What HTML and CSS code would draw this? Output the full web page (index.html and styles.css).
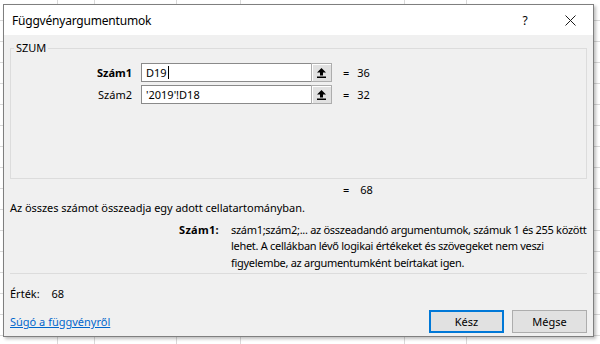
FILE: index.html
```html
<!DOCTYPE html>
<html lang="hu">
<head>
    <meta charset="UTF-8">
    <title>Függvényargumentumok</title>
    <link rel="stylesheet" href="styles.css">
</head>
<body>
    <div class="dialog">
        <!-- Címsor -->
        <div class="titlebar">
            <span class="title">Függvényargumentumok</span>
            <span class="help">?</span>
            <span class="close">
                <svg width="11" height="11" viewBox="0 0 11 11"><path d="M0.5 0.5 L10.5 10.5 M10.5 0.5 L0.5 10.5" stroke="#1a1a1a" stroke-width="1"/></svg>
            </span>
        </div>

        <div class="content">
            <fieldset class="group">
                <legend>SZUM</legend>

                <div class="arg-row">
                    <label class="arg-label active">Szám1</label>
                    <div class="ref-input">D19<span class="caret"></span></div>
                    <span class="collapse">
                        <svg width="9" height="10" viewBox="0 0 9 10"><path d="M4.5 0 L9 4.5 L6 4.5 L6 7.5 L3 7.5 L3 4.5 L0 4.5 Z" fill="#000"/><rect x="0" y="8.5" width="9" height="1.5" fill="#000"/></svg>
                    </span>
                    <span class="eq">=</span>
                    <span class="val">36</span>
                </div>

                <div class="arg-row">
                    <label class="arg-label">Szám2</label>
                    <div class="ref-input">'2019'!D18</div>
                    <span class="collapse">
                        <svg width="9" height="10" viewBox="0 0 9 10"><path d="M4.5 0 L9 4.5 L6 4.5 L6 7.5 L3 7.5 L3 4.5 L0 4.5 Z" fill="#000"/><rect x="0" y="8.5" width="9" height="1.5" fill="#000"/></svg>
                    </span>
                    <span class="eq">=</span>
                    <span class="val">32</span>
                </div>
            </fieldset>

            <div class="result-row">
                <span class="eq">=</span>
                <span class="val">68</span>
            </div>

            <p class="summary">Az összes számot összeadja egy adott cellatartományban.</p>

            <div class="arg-help">
                <span class="arg-help-name">Szám1:</span>
                <span class="arg-help-text">szám1;szám2;... az összeadandó argumentumok, számuk 1 és 255 között<br>lehet. A cellákban lévő logikai értékeket és szövegeket nem veszi<br>figyelembe, az argumentumként beírtakat igen.</span>
            </div>

            <div class="separator"></div>

            <div class="value-row">
                <span>Érték:</span>
                <span class="value-num">68</span>
            </div>

            <div class="footer">
                <a href="#" class="help-link">Súgó a függvényről</a>
                <div class="buttons">
                    <button class="btn btn-primary">Kész</button>
                    <button class="btn">Mégse</button>
                </div>
            </div>
        </div>
    </div>
</body>
</html>
```

FILE: styles.css
```css
* {
    margin: 0;
    padding: 0;
    box-sizing: border-box;
}

body {
    width: 600px;
    height: 344px;
    overflow: hidden;
    padding: 4px 0 0 3px;
    font-family: "Noto Sans", sans-serif;
    font-size: 11px;
    color: #000;
    background-color: #fff;
    background-image:
        linear-gradient(to right,
            transparent 57px, #d9d9d9 57px 58px,
            transparent 58px 94px, #d9d9d9 94px 95px,
            transparent 95px 176px, #d9d9d9 176px 177px,
            transparent 177px 240px, #d9d9d9 240px 241px,
            transparent 241px 404px, #d9d9d9 404px 405px,
            transparent 405px 466px, #d9d9d9 466px 467px,
            transparent 467px),
        repeating-linear-gradient(to bottom, transparent 0 20px, #d9d9d9 20px 21px);
}

.dialog {
    width: 591px;
    height: 333px;
    background: #f0f0f0;
    border: 1px solid #7f7f7f;
    box-shadow: 2px 2px 3px rgba(0, 0, 0, 0.25);
}

/* címsor */
.titlebar {
    height: 30px;
    background: #fff;
    display: flex;
    align-items: center;
    padding-left: 8px;
}

.title {
    font-size: 12px;
    letter-spacing: -0.2px;
}

.help {
    margin-left: auto;
    width: 46px;
    text-align: center;
    font-size: 12px;
}

.close {
    width: 45px;
    height: 30px;
    display: flex;
    align-items: center;
    justify-content: center;
}

.content {
    padding: 5px 6px 0 6px;
}

/* csoportdoboz */
.group {
    border: 1px solid #dcdcdc;
    padding: 7px 0 74px 0;
}

.group legend {
    margin-left: 3px;
    padding: 0 2px;
    line-height: 16px;
}

.arg-row {
    display: flex;
    align-items: center;
    height: 19px;
}

.arg-row + .arg-row {
    margin-top: 3px;
}

.arg-label {
    width: 121px;
    margin-right: 9px;
    text-align: right;
}

.arg-label.active {
    font-weight: 700;
}

.ref-input {
    width: 170px;
    height: 19px;
    background: #fff;
    border: 1px solid #8a8a8a;
    border-right: none;
    padding-left: 4px;
    line-height: 17px;
    display: flex;
    align-items: center;
}

.caret {
    display: inline-block;
    width: 1px;
    height: 13px;
    background: #000;
    margin-left: 1px;
}

.collapse {
    width: 21px;
    height: 19px;
    background: #e1e1e1;
    border: 1px solid #adadad;
    box-shadow: inset 1px 1px 0 #fff;
    display: flex;
    align-items: center;
    justify-content: center;
}

.eq {
    margin-left: 11px;
}

.val {
    margin-left: 8px;
}

.result-row {
    margin-top: 3px;
    line-height: 16px;
    padding-left: 322px;
}

.summary {
    margin-top: 2px;
    line-height: 16px;
    letter-spacing: -0.05px;
}

.arg-help {
    margin-top: 6px;
    display: grid;
    grid-template-columns: 209px 1fr;
    column-gap: 12px;
    line-height: 16.4px;
}

.arg-help-name {
    text-align: right;
    font-weight: 700;
    letter-spacing: 0.3px;
}

.arg-help-text {
    white-space: nowrap;
    letter-spacing: -0.3px;
}

.separator {
    margin-top: 2px;
    border-top: 1px solid #dcdcdc;
}

.value-row {
    margin-top: 12px;
    line-height: 16px;
}

.value-num {
    margin-left: 9px;
}

.footer {
    margin-top: 8px;
    display: flex;
    align-items: center;
    justify-content: space-between;
}

.help-link {
    color: #0066cc;
    text-decoration: underline;
}

.buttons {
    display: flex;
    gap: 8px;
}

.btn {
    width: 75px;
    height: 23px;
    font-family: "Noto Sans", sans-serif;
    font-size: 11px;
    color: #000;
    background: #e1e1e1;
    border: 1px solid #adadad;
}

.btn-primary {
    border: 2px solid #0078d7;
}
```
